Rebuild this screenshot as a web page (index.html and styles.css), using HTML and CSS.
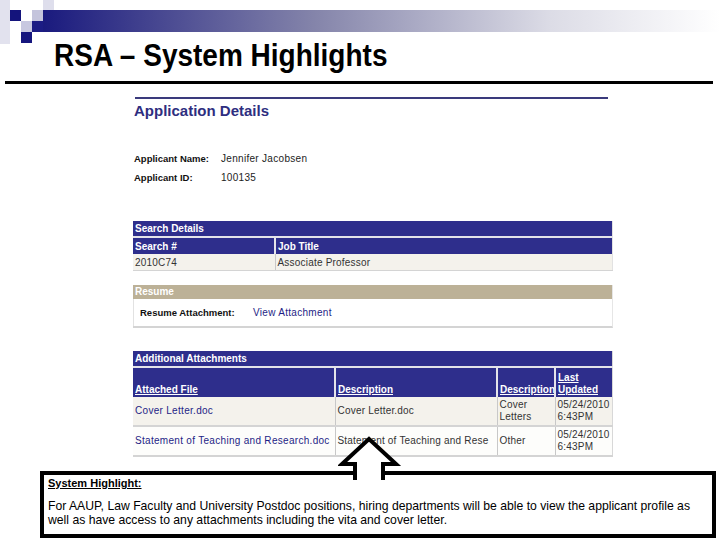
FILE: index.html
```html
<!DOCTYPE html>
<html lang="en">
  <head>
    <meta charset="UTF-8" />
    <meta name="viewport" content="width=device-width, initial-scale=1.0" />
    <title>RSA – System Highlights</title>
    <link rel="stylesheet" href="styles.css">
  </head>
  <body>
    <!-- Slide banner: checker squares and fading bar -->
    <svg class="banner" width="720" height="44" viewBox="0 0 720 44">
      <defs>
        <linearGradient id="fade" x1="0" x2="1" y1="0" y2="0">
          <stop offset="0" stop-color="#1a1a7e" />
          <stop offset="0.4" stop-color="#8484aa" />
          <stop offset="0.75" stop-color="#dcdce6" />
          <stop offset="1" stop-color="#ffffff" />
        </linearGradient>
      </defs>
      <rect x="0" y="0" width="10" height="44" fill="#e2e2ee" />
      <rect x="43" y="10" width="677" height="22" fill="url(#fade)" />
      <rect x="43" y="0" width="11" height="10" fill="#dedeec" />
      <rect x="10" y="10" width="11" height="11" fill="#14147c" />
      <rect x="32" y="10" width="11" height="11" fill="#c4c4dc" />
      <rect x="21" y="21" width="11" height="11" fill="#c8c8e0" />
      <rect x="21" y="32" width="11" height="11" fill="#16167e" />
      <rect x="32" y="21" width="11" height="11" fill="#1c1c84" />
    </svg>

    <h1 class="title">RSA – System Highlights</h1>
    <div class="rule"></div>

    <div class="screen">
      <div class="screen-line"></div>
      <h2 class="page-title">Application Details</h2>

      <div class="applicant">
        <span class="label">Applicant Name:</span>
        <span class="value">Jennifer Jacobsen</span>
        <span class="label">Applicant ID:</span>
        <span class="value">100135</span>
      </div>

      <!-- Search details grid -->
      <table class="grid search">
        <colgroup>
          <col class="col-search" />
          <col />
        </colgroup>
        <tr class="caption"><td colspan="2">Search Details</td></tr>
        <tr class="head">
          <td>Search #</td>
          <td>Job Title</td>
        </tr>
        <tr class="row odd">
          <td>2010C74</td>
          <td>Associate Professor</td>
        </tr>
      </table>

      <!-- Resume box -->
      <div class="resume">
        <div class="resume-head">Resume</div>
        <div class="resume-body">
          <span class="label">Resume Attachment:</span>
          <a class="link" href="#">View Attachment</a>
        </div>
      </div>

      <!-- Additional attachments grid -->
      <table class="grid attachments">
        <colgroup>
          <col class="col-file" />
          <col class="col-desc" />
          <col class="col-type" />
          <col />
        </colgroup>
        <tr class="caption"><td colspan="4">Additional Attachments</td></tr>
        <tr class="head tall">
          <td><u>Attached File</u></td>
          <td><u>Description</u></td>
          <td><u>Description</u></td>
          <td><u>Last<br>Updated</u></td>
        </tr>
        <tr class="row odd">
          <td><a class="link" href="#">Cover Letter.doc</a></td>
          <td>Cover Letter.doc</td>
          <td>Cover<br>Letters</td>
          <td>05/24/2010<br>6:43PM</td>
        </tr>
        <tr class="row even">
          <td><a class="link" href="#">Statement of Teaching and Research.doc</a></td>
          <td>Statement of Teaching and Rese</td>
          <td>Other</td>
          <td>05/24/2010<br>6:43PM</td>
        </tr>
      </table>
    </div>

    <div class="callout">
      <!-- arrow pointing up at the attachments grid -->
      <svg class="arrow" width="64" height="44" viewBox="0 0 64 44">
        <path d="M17 44 V28 H4 L31 3 L58 28 H45 V44" fill="#fff" stroke="#000" stroke-width="4" stroke-linejoin="miter" />
      </svg>
      <div class="note">
        <div class="note-title">System Highlight:</div>
        <p>For AAUP, Law Faculty and University Postdoc positions, hiring departments will be able to view the applicant profile as well as have access to any attachments including the vita and cover letter.</p>
      </div>
    </div>
  </body>
</html>
```

FILE: styles.css
```css
/* Basic reset */
body,
html {
  margin: 0;
  padding: 0;
  background: #fff;
  font-family: "Liberation Sans", Arial, sans-serif;
  width: 720px;
  height: 540px;
  overflow: hidden;
}

.banner {
  display: block;
}

/* Slide heading */
.title {
  margin: -3px 0 0 54px;
  font-size: 28px;
  line-height: 34px;
  font-weight: bold;
  color: #000;
  transform: scaleY(1.12);
  transform-origin: left bottom;
}

.rule {
  height: 3px;
  margin: 6px 7px 0 5px;
  background: #000;
}

/* Screen capture area */
.screen {
  margin: 13px 0 0 133px;
  width: 480px;
  font-size: 10px;
  color: #333;
}

.screen-line {
  height: 2px;
  margin: 0 5px 0 2px;
  background: #3a3a7c;
}

.page-title {
  margin: 3px 0 0 1px;
  font-size: 15px;
  line-height: 18px;
  color: #2e2e80;
}

.applicant {
  display: grid;
  grid-template-columns: 87px auto;
  margin: 29px 0 0 1px;
  line-height: 19px;
}

.label {
  font-weight: bold;
  font-size: 9.5px;
  color: #111;
}

.value {
  font-size: 10px;
  letter-spacing: 0.3px;
  color: #222;
}

.link {
  color: #1e1e86;
  text-decoration: none;
  letter-spacing: 0.3px;
}

/* Grids */
.grid {
  width: 480px;
  border-collapse: collapse;
  font-size: 10px;
  table-layout: fixed;
}

.grid td {
  padding: 0 2px;
  vertical-align: middle;
  white-space: nowrap;
  overflow: hidden;
}

.caption td {
  background: #2e2e8c;
  color: #fff;
  font-weight: bold;
  height: 15px;
  border-bottom: 2px solid #e4e4ea;
}

.head td {
  background: #2e2e8c;
  color: #fff;
  font-weight: bold;
  height: 16px;
  border-left: 2px solid #e4e4ea;
}

.head td:first-child,
.row td:first-child {
  border-left: none;
}

.head.tall td {
  height: 28px;
  vertical-align: bottom;
  line-height: 12px;
  padding-bottom: 1px;
}

.row td {
  height: 16px;
  border-left: 1px solid #c8c8c8;
  border-bottom: 1px solid #d4d4d4;
  color: #333;
  letter-spacing: 0.2px;
}

.row.odd td {
  background: #f4f2ec;
}

.row.even td {
  background: #fdfdfb;
}

.search {
  margin-top: 34px;
  border-right: 1px solid #e2e2e2;
}

.search .col-search {
  width: 142px;
}

/* Resume */
.resume {
  margin-top: 14px;
  border-bottom: 2px solid #d4d4d4;
  border-right: 1px solid #e6e6e6;
}

.resume-head {
  height: 14px;
  line-height: 14px;
  padding-left: 2px;
  background: #bcb197;
  color: #fff;
  font-weight: bold;
  font-size: 10px;
}

.resume-body {
  display: flex;
  align-items: center;
  height: 27px;
  padding-left: 6px;
  border-left: 1px solid #e2e2e2;
}

.resume-body .label {
  width: 113px;
}

/* Attachments */
.attachments {
  margin-top: 23px;
  border-right: 1px solid #d8d8d8;
}

.attachments .col-file {
  width: 202px;
}

.attachments .col-desc {
  width: 162px;
}

.attachments .col-type {
  width: 58px;
}

.attachments .row td {
  height: 28px;
  line-height: 12px;
  border-bottom-width: 2px;
}

/* Highlight note */
.callout {
  position: relative;
  margin: 14px 0 0 40px;
  width: 676px;
}

.arrow {
  position: absolute;
  left: 298px;
  top: -35px;
  z-index: 1;
}

.note {
  height: 57px;
  padding: 2px 4px 0 4px;
  border: 4px solid #000;
  font-size: 12.2px;
  color: #000;
}

.note-title {
  font-weight: bold;
  text-decoration: underline;
  font-size: 11px;
  line-height: 13px;
}

.note p {
  margin: 9px 0 0;
  line-height: 14px;
}
```
